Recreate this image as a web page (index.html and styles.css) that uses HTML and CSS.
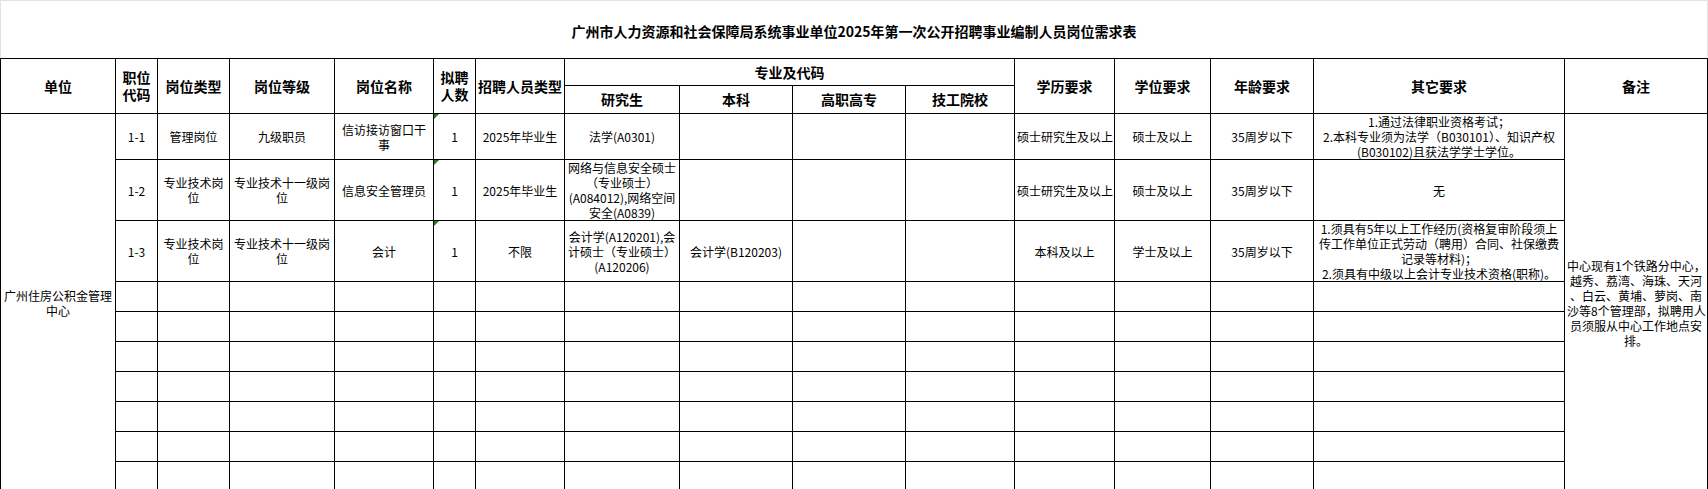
FILE: index.html
```html
<!DOCTYPE html>
<html lang="zh-CN">
<head>
<meta charset="utf-8">
<title>岗位需求表</title>
<link rel="stylesheet" href="styles.css">
</head>
<body>
<div class="sheet">
  <div class="title">广州市人力资源和社会保障局系统事业单位2025年第一次公开招聘事业编制人员岗位需求表</div>
  <table class="grid">
    <colgroup>
      <col class="c-unit"><col class="c-code"><col class="c-type"><col class="c-grade"><col class="c-name">
      <col class="c-num"><col class="c-kind"><col class="c-grad"><col class="c-bach"><col class="c-voc">
      <col class="c-tech"><col class="c-edu"><col class="c-deg"><col class="c-age"><col class="c-other"><col class="c-note">
    </colgroup>
    <thead>
      <tr class="h1">
        <th rowspan="2">单位</th>
        <th rowspan="2" class="two">职位<br>代码</th>
        <th rowspan="2">岗位类型</th>
        <th rowspan="2">岗位等级</th>
        <th rowspan="2">岗位名称</th>
        <th rowspan="2" class="two">拟聘<br>人数</th>
        <th rowspan="2">招聘人员类型</th>
        <th colspan="4">专业及代码</th>
        <th rowspan="2">学历要求</th>
        <th rowspan="2">学位要求</th>
        <th rowspan="2">年龄要求</th>
        <th rowspan="2">其它要求</th>
        <th rowspan="2">备注</th>
      </tr>
      <tr class="h2">
        <th>研究生</th>
        <th>本科</th>
        <th>高职高专</th>
        <th>技工院校</th>
      </tr>
    </thead>
    <tbody>
      <tr class="r45">
        <td rowspan="10">广州住房公积金管理<br>中心</td>
        <td>1-1</td>
        <td>管理岗位</td>
        <td>九级职员</td>
        <td>信访接访窗口干<br>事</td>
        <td class="flag">1</td>
        <td>2025年毕业生</td>
        <td>法学(A0301)</td>
        <td></td>
        <td></td>
        <td></td>
        <td>硕士研究生及以上</td>
        <td>硕士及以上</td>
        <td>35周岁以下</td>
        <td>1.通过法律职业资格考试；<br>2.本科专业须为法学（B030101）、知识产权<br>(B030102)且获法学学士学位。</td>
        <td rowspan="10">中心现有1个铁路分中心，<br>越秀、荔湾、海珠、天河<br>、白云、黄埔、萝岗、南<br>沙等8个管理部，拟聘用人<br>员须服从中心工作地点安<br>排。</td>
      </tr>
      <tr class="r60">
        <td>1-2</td>
        <td>专业技术岗<br>位</td>
        <td>专业技术十一级岗<br>位</td>
        <td>信息安全管理员</td>
        <td class="flag">1</td>
        <td>2025年毕业生</td>
        <td>网络与信息安全硕士<br>（专业硕士）<br>(A084012),网络空间<br>安全(A0839)</td>
        <td></td>
        <td></td>
        <td></td>
        <td>硕士研究生及以上</td>
        <td>硕士及以上</td>
        <td>35周岁以下</td>
        <td>无</td>
      </tr>
      <tr class="r60">
        <td>1-3</td>
        <td>专业技术岗<br>位</td>
        <td>专业技术十一级岗<br>位</td>
        <td>会计</td>
        <td class="flag">1</td>
        <td>不限</td>
        <td>会计学(A120201),会<br>计硕士（专业硕士）<br>(A120206)</td>
        <td>会计学(B120203)</td>
        <td></td>
        <td></td>
        <td>本科及以上</td>
        <td>学士及以上</td>
        <td>35周岁以下</td>
        <td>1.须具有5年以上工作经历(资格复审阶段须上<br>传工作单位正式劳动（聘用）合同、社保缴费<br>记录等材料)；<br>2.须具有中级以上会计专业技术资格(职称)。</td>
      </tr>
      <tr class="r30"><td></td><td></td><td></td><td></td><td></td><td></td><td></td><td></td><td></td><td></td><td></td><td></td><td></td><td></td></tr>
      <tr class="r30"><td></td><td></td><td></td><td></td><td></td><td></td><td></td><td></td><td></td><td></td><td></td><td></td><td></td><td></td></tr>
      <tr class="r30"><td></td><td></td><td></td><td></td><td></td><td></td><td></td><td></td><td></td><td></td><td></td><td></td><td></td><td></td></tr>
      <tr class="r30"><td></td><td></td><td></td><td></td><td></td><td></td><td></td><td></td><td></td><td></td><td></td><td></td><td></td><td></td></tr>
      <tr class="r30"><td></td><td></td><td></td><td></td><td></td><td></td><td></td><td></td><td></td><td></td><td></td><td></td><td></td><td></td></tr>
      <tr class="r30"><td></td><td></td><td></td><td></td><td></td><td></td><td></td><td></td><td></td><td></td><td></td><td></td><td></td><td></td></tr>
      <tr class="r30"><td></td><td></td><td></td><td></td><td></td><td></td><td></td><td></td><td></td><td></td><td></td><td></td><td></td><td></td></tr>
    </tbody>
  </table>
</div>
</body>
</html>
```

FILE: styles.css
```css
html, body {
  margin: 0;
  padding: 0;
  background: #ffffff;
}

body {
  font-family: "Noto Sans CJK SC", "Liberation Sans", sans-serif;
  color: #000000;
}

.sheet {
  width: 1708px;
}

.title {
  height: 55px;
  padding-top: 2px;
  border-top: 1px solid #e2e2e2;
  border-left: 1px solid #e2e2e2;
  border-right: 1px solid #e2e2e2;
  display: flex;
  align-items: center;
  justify-content: center;
  font-size: 14px;
  font-weight: 700;
  line-height: 16px;
}

.grid {
  width: 1708px;
  table-layout: fixed;
  border-collapse: collapse;
}

.grid th,
.grid td {
  border: 1px solid #000000;
  padding: 0 2px;
  text-align: center;
  vertical-align: middle;
  overflow: hidden;
}

.grid th {
  font-size: 14px;
  font-weight: 700;
  line-height: 15px;
}

.grid th.two {
  line-height: 17px;
}

.grid td {
  font-size: 12px;
  font-weight: 400;
  line-height: 15px;
  white-space: nowrap;
}

.c-unit { width: 115px; }
.c-code { width: 42px; }
.c-type { width: 72px; }
.c-grade { width: 105px; }
.c-name { width: 99px; }
.c-num { width: 42px; }
.c-kind { width: 89px; }
.c-grad { width: 115px; }
.c-bach { width: 113px; }
.c-voc { width: 113px; }
.c-tech { width: 109px; }
.c-edu { width: 100px; }
.c-deg { width: 96px; }
.c-age { width: 103px; }
.c-other { width: 251px; }
.c-note { width: 143px; }

.h1 { height: 27px; }
.h2 { height: 28px; }
.r45 { height: 45px; }
.r60 { height: 60px; }
.r30 { height: 30px; }

.flag {
  position: relative;
}

.flag::before {
  content: "";
  position: absolute;
  left: 0;
  top: 0;
  width: 0;
  height: 0;
  border-top: 5px solid #1e7e1e;
  border-right: 5px solid transparent;
}
```
